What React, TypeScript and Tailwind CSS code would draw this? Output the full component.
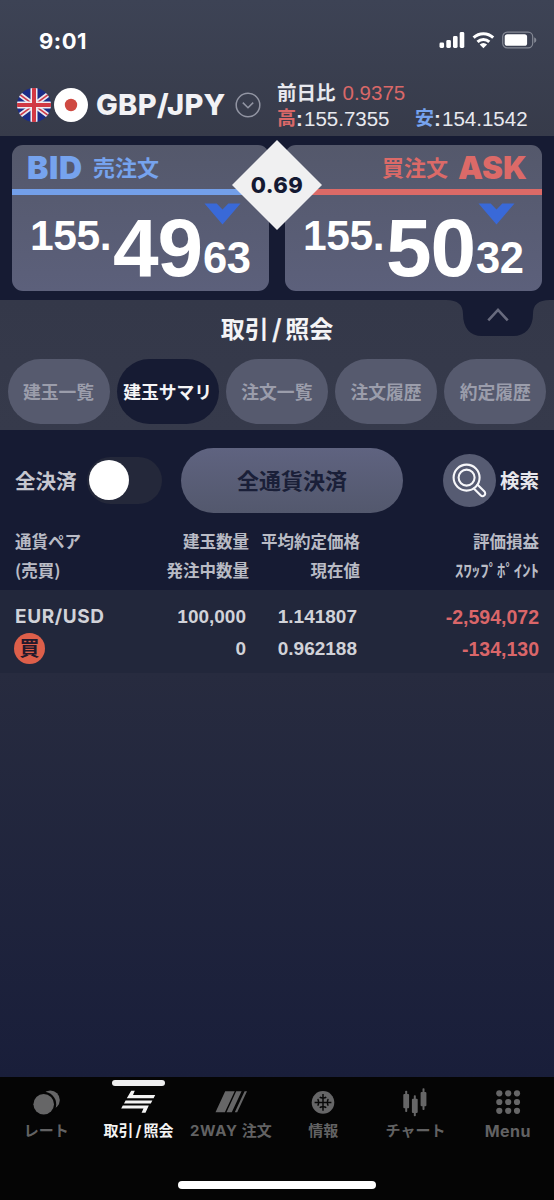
import React from "react";

const JP = "font-['Noto_Sans_CJK_JP',sans-serif]";
const SANS = "font-['Liberation_Sans','Noto_Sans_CJK_JP',sans-serif]";
const UI = "font-['Inter','Noto_Sans_CJK_JP',sans-serif]";

function UkFlag() {
  return (
    <svg className="h-[34px] w-[34px]" viewBox="0 0 34 34">
      <defs>
        <clipPath id="uk"><circle cx="17" cy="17" r="17" /></clipPath>
      </defs>
      <g clipPath="url(#uk)">
        <rect width="34" height="34" fill="#1b2c86" />
        <path d="M-2 3 36 31M36 3-2 31" stroke="#e9e6ee" strokeWidth="5" />
        <path d="M-2 3 36 31M36 3-2 31" stroke="#cf3a48" strokeWidth="1.7" />
        <path d="M17 0v34M0 17h34" stroke="#f0edf2" strokeWidth="7" />
        <path d="M17 0v34M0 17h34" stroke="#d13843" strokeWidth="4" />
      </g>
    </svg>
  );
}

function StatusBar() {
  return (
    <div className="flex h-[80px] items-start justify-between pl-[39px] pr-[16px]">
      <span className={`${UI} mt-[29px] text-[22px] font-bold leading-6 tracking-[0.5px] text-white`}>9:01</span>
      <div className="mt-[31px] flex items-center">
        <svg className="h-[18px] w-[27px]" viewBox="0 0 27 18" fill="#fff">
          <rect x="0.5" y="11.5" width="4.6" height="5.5" rx="1.4" />
          <rect x="7.3" y="9" width="4.6" height="8" rx="1.4" />
          <rect x="14" y="5" width="4.6" height="12" rx="1.4" />
          <rect x="20.7" y="1" width="4.6" height="16" rx="1.4" />
        </svg>
        <svg className="ml-[6px] h-[18px] w-[24px]" viewBox="0 0 24 18" fill="none" stroke="#fff" strokeWidth="3">
          <path d="M1.6 6.7a14.2 14.2 0 0 1 19.6 0" />
          <path d="M5.5 10.8a8.7 8.7 0 0 1 11.8 0" />
          <path d="M11.4 17.2 7.7 13.5a5.3 5.3 0 0 1 7.4 0Z" fill="#fff" stroke="none" />
        </svg>
        <svg className="ml-[6px] h-[18px] w-[36px]" viewBox="0 0 36 18">
          <rect x="0.7" y="1.2" width="30" height="15.6" rx="4.6" fill="none" stroke="#858995" strokeWidth="1.2" />
          <rect x="2.7" y="3.2" width="22.4" height="11.6" rx="2.6" fill="#fff" />
          <path d="M32.2 6.3q2.2.9 2.2 2.8t-2.2 2.8Z" fill="#858995" />
        </svg>
      </div>
    </div>
  );
}

function PairHeader() {
  return (
    <div className="flex h-[56px] items-start pl-[17px]">
      <div className="mt-[8px] flex items-center">
        <UkFlag />
        <svg className="ml-[3px] h-[34px] w-[34px]" viewBox="0 0 34 34">
          <circle cx="17" cy="17" r="17" fill="#fff" />
          <circle cx="17" cy="17" r="6.2" fill="#cf4a42" />
        </svg>
        <span className={`${UI} ml-[8px] w-[130px] whitespace-nowrap text-[29px] font-extrabold leading-[34px] tracking-[0.3px] text-[#f2f2f5]`}>GBP/JPY</span>
        <svg className="ml-[9px] h-[26px] w-[26px]" viewBox="0 0 26 26" fill="none" stroke="#9295a3" strokeWidth="1.5">
          <circle cx="13" cy="13" r="11.8" />
          <path d="m7.8 10.6 5.2 5.2 5.2-5.2" />
        </svg>
      </div>
      <div className={`${SANS} ml-[16px] text-[20.5px] text-[#e8e9ef]`}>
        <div className="flex h-[26px] items-center leading-[26px]">
          <span className="-mt-px text-[19.5px] font-bold">前日比</span>
          <span className="ml-[7px] text-[#d96868]">0.9375</span>
        </div>
        <div className="flex h-[26px] items-center whitespace-nowrap leading-[26px]">
          <span className="-mt-px text-[19px] font-bold text-[#d96868]">高</span>
          <b className="w-[8px]">:</b>
          <span className="w-[111px]">155.7355</span>
          <span className="-mt-px text-[19px] font-bold text-[#76a3ef]">安</span>
          <b className="w-[8px]">:</b>
          <span>154.1542</span>
        </div>
      </div>
    </div>
  );
}

function Price({ big, small }: { big: string; small: string }) {
  return (
    <div className={`${SANS} flex items-start whitespace-nowrap font-bold leading-none text-white`}>
      <span className="mt-[22px] w-[83px] text-[42.5px] tracking-[-0.4px]">155.</span>
      <span className="mt-[14px] w-[90px] text-[82px] tracking-[-1.2px]">{big}</span>
      <span className="mt-[44px] text-[43.5px] tracking-[-0.4px]">{small}</span>
    </div>
  );
}

function Down({ className }: { className: string }) {
  return (
    <svg className={`absolute top-[58px] h-[22px] w-[37px] ${className}`} viewBox="0 0 37 22">
      <path d="M.5.5h12.2l5.8 6 5.8-6h12.2l-18 21Z" fill="#3969d8" />
    </svg>
  );
}

const card = "relative h-[146px] w-[257px] rounded-[11px] bg-linear-to-b from-[#54586b] to-[#5c607b]";

function Rates() {
  return (
    <section className="relative flex h-[164px] justify-between bg-[#161b33] px-[12px] pt-[9px]">
      <div className={card}>
        <div className="flex h-[44px] items-center pl-[15px] text-[#76a3ee]">
          <span className={`${UI} w-[66px] pt-[2px] text-[32px] font-black leading-[44px] tracking-[0.6px]`}>BID</span>
          <span className={`${JP} -mt-[2px] text-[22px] font-bold leading-[44px]`}>売注文</span>
        </div>
        <div className="h-[6px] bg-[#739fe9]" />
        <div className="-mt-0.5 pl-[18px]"><Price big="49" small="63" /></div>
        <Down className="left-[192px]" />
      </div>
      <div className={card}>
        <div className="flex h-[44px] items-center justify-end pr-[15px] text-[#dc6a68]">
          <span className={`${JP} -mt-[2px] text-[22px] font-bold leading-[44px]`}>買注文</span>
          <span className={`${UI} ml-[10px] pt-[2px] text-[31.5px] font-black leading-[44px]`}>ASK</span>
        </div>
        <div className="h-[6px] bg-[#dc6a67]" />
        <div className="-mt-0.5 pl-[18px]"><Price big="50" small="32" /></div>
        <Down className="left-[193px]" />
      </div>
      <div className="absolute left-[232px] top-[4px] flex h-[90px] w-[90px] items-center justify-center bg-[#f0f0f1] [clip-path:polygon(50%_0,100%_50%,50%_100%,0_50%)]">
        <span className={`${UI} text-[22px] font-extrabold leading-6 tracking-[0.5px] text-[#141932]`}>0.69</span>
      </div>
    </section>
  );
}

const tabs = ["建玉一覧", "建玉サマリ", "注文一覧", "注文履歴", "約定履歴"];

function TabsPanel() {
  return (
    <section className="relative h-[130px] bg-linear-to-b from-[#343849] to-[#363a4b]">
      <svg className="absolute left-[446px] top-0 h-[36px] w-[104px]" viewBox="0 0 104 36">
        <path d="M0 0C12 0 17 5 17 14C17 28 24 36 36 36H67C79 36 87 28 87 14C87 5 92 0 104 0Z" fill="#161b33" />
        <path d="m42.3 20.3 9.7-10.5 9.7 10.5" fill="none" stroke="#686b7e" strokeWidth="2.6" />
      </svg>
      <h1 className={`${JP} flex h-[59px] items-center justify-center pb-[3px] text-[24px] font-bold leading-[56px] text-[#f4f4f6]`}>
        取引<span className="mx-[3.5px] [-webkit-text-stroke:0.5px_#f4f4f6]">/</span>照会
      </h1>
      <div className="flex gap-[7.2px] pl-[7.5px]">
        {tabs.map((t, i) => (
          <button key={t} className={`${JP} flex h-[65px] w-[102px] shrink-0 items-center justify-center whitespace-nowrap rounded-full pb-px text-[17.8px] font-bold ${i === 1 ? "bg-[#161b33] text-[#f5f5f7]" : "bg-[#565a6e] text-[#9b9dab]"}`}>{t}</button>
        ))}
      </div>
    </section>
  );
}

function Controls() {
  return (
    <div className="flex h-[101px] items-center pl-[15px]">
      <span className={`${JP} w-[72px] pb-px text-[20.5px] font-bold text-[#c6c7cf]`}>全決済</span>
      <div className="-mt-px flex h-[47px] w-[75px] items-center rounded-full bg-[#24283a] pl-[2px]">
        <div className="h-[40px] w-[40px] rounded-full bg-white" />
      </div>
      <button className={`${JP} ml-[19px] h-[65px] w-[222px] rounded-full bg-linear-to-b from-[#5f6380] to-[#53586d] pb-[3px] text-[22px] font-bold text-[#1a1f38]`}>全通貨決済</button>
      <svg className="ml-[40px] h-[53px] w-[53px]" viewBox="0 0 53 53" fill="none">
        <circle cx="26.5" cy="26.5" r="26.5" fill="#565b72" />
        <g stroke="#f7f7fa" strokeWidth="2.1">
          <circle cx="23.6" cy="23.6" r="13" />
          <circle cx="23.6" cy="23.6" r="8" />
          <path d="m30.8 34.5 6.8 6.8a2.6 2.6 0 0 0 3.8-3.8l-6.8-6.8" strokeLinecap="round" />
        </g>
      </svg>
      <span className={`${JP} ml-[4px] pb-[2px] text-[19.5px] font-bold text-[#e7e7ec]`}>検索</span>
    </div>
  );
}

const cols = "grid grid-cols-[105px_129px_111px_179px] px-[15px]";

function Positions() {
  return (
    <>
      <div className={`${cols} ${JP} h-[59px] content-start auto-rows-[30px] whitespace-nowrap bg-[#161b33] text-[16.5px] font-bold leading-[30px] text-[#b9bbc5]`}>
        <span className="-mt-[5px]">通貨ペア</span>
        <span className="-mt-[5px] text-right">建玉数量</span>
        <span className="-mt-[5px] text-right">平均約定価格</span>
        <span className="-mt-[5px] text-right">評価損益</span>
        <span className="-mt-[6px]">(売買)</span>
        <span className="-mt-[6px] text-right">発注中数量</span>
        <span className="-mt-[6px] text-right">現在値</span>
        <span className="-mt-[6px] text-right text-[16.8px]">ｽﾜｯﾌﾟﾎﾟｲﾝﾄ</span>
      </div>
      <div className={`${cols} ${SANS} h-[83px] auto-rows-[32px] whitespace-nowrap bg-[#22273b] pt-[11px] text-[19px] font-bold leading-[32px] text-[#d1d2d8]`}>
        <span className={`${UI} text-[19px] tracking-[0.6px]`}>EUR/USD</span>
        <span className="pr-[3px] text-right">100,000</span>
        <span className="pr-[3px] text-right">1.141807</span>
        <span className="text-right text-[19.5px] text-[#da6669]">-2,594,072</span>
        <span className={`${JP} -ml-px flex h-[31px] w-[31px] items-center justify-center rounded-full bg-[#dd5f4a] pb-[2px] text-[20px] leading-[28px] text-[#22192c]`}>買</span>
        <span className="pr-[3px] text-right">0</span>
        <span className="pr-[3px] text-right">0.962188</span>
        <span className="text-right text-[19.5px] text-[#da6669]">-134,130</span>
      </div>
    </>
  );
}

const icons = [
  <svg key="r" viewBox="0 0 40 32" className="h-8 w-10">
    <circle cx="24.3" cy="14" r="9.5" />
    <circle cx="17.7" cy="18.3" r="12.5" fill="#050505" />
    <circle cx="17.7" cy="18.3" r="10.3" />
  </svg>,
  <svg key="t" viewBox="0 0 40 32" className="h-8 w-10">
    <path d="M13.2 4.7h3.6l-1.8 4.4h22.2l-1.6 3.1H8.8ZM7.6 14.4h26.8l-1.6 3H6ZM4.8 19.5h26L27.5 26.7h-3.9l1.9-4.2H3.2Z" />
  </svg>,
  <svg key="w" viewBox="0 0 40 32" className="h-8 w-10">
    <path d="M14.2 5.3h9.5L13.9 26.2H4.5ZM25.2 5.3h5.4l-9.8 20.9h-5.3ZM33.6 5.3h2.4l-9.8 20.9h-2.4Z" />
  </svg>,
  <svg key="i" viewBox="0 0 40 32" className="h-8 w-10">
    <circle cx="20" cy="16.4" r="11.3" />
    <g stroke="#080808" strokeWidth="1.5" fill="none">
      <path d="M20 8v16.8M11.6 16.4h16.8" />
      <path d="M16.8 11q.8 1 3.2 1 2.4 0 3.2-1M16.8 21.8q.8-1 3.2-1 2.4 0 3.2 1M14.6 13.2q1 .8 1 3.2 0 2.4-1 3.2M25.4 13.2q-1 .8-1 3.2 0 2.4 1 3.2" />
    </g>
  </svg>,
  <svg key="c" viewBox="0 0 40 32" className="h-8 w-10">
    <rect x="8.3" y="8" width="5.8" height="14.3" rx="1" /><rect x="10.2" y="4.8" width="2" height="21.2" rx="0.8" />
    <rect x="16.9" y="12.7" width="5.8" height="14.2" rx="1" /><rect x="18.8" y="9.3" width="2" height="20.9" rx="0.8" />
    <rect x="25.6" y="6" width="5.8" height="14.2" rx="1" /><rect x="27.5" y="2.3" width="2" height="21.8" rx="0.8" />
  </svg>,
  <svg key="m" viewBox="0 0 40 32" className="h-8 w-10">
    {[7.3, 16, 24.8].map((y) => [11.3, 20.2, 29].map((x) => <circle key={`${x}-${y}`} cx={x} cy={y} r="3.1" />))}
  </svg>,
];

const labels: React.ReactNode[] = ["レート", <>取引<span className="mx-[2px]">/</span>照会</>, <><span className="tracking-[0.7px]">2WAY</span><span className="ml-[4px]">注文</span></>, "情報", "チャート", <span className="text-[16px] tracking-[0.5px]">Menu</span>];

function Nav() {
  return (
    <nav className="h-[123px] bg-[#050505] pt-[3px]">
      <div className="grid grid-cols-6">
        {icons.map((icon, i) => (
          <div key={i} className={`flex flex-col items-center ${i === 1 ? "fill-[#f3f3f3] text-[#f3f3f3]" : "fill-[#666667] text-[#626263]"}`}>
            <div className={`h-[6px] w-[53px] rounded-full ${i === 1 ? "bg-[#eeeeef]" : "bg-transparent"}`} />
            {icon}
            <span className={`${UI} mt-[1px] whitespace-nowrap text-[15px] font-bold leading-[24px]`}>{labels[i]}</span>
          </div>
        ))}
      </div>
      <div className="mx-auto mt-[37px] h-[8px] w-[198px] rounded-full bg-white" />
    </nav>
  );
}

export default function App() {
  return (
    <main className="flex h-[1200px] w-[554px] flex-col overflow-hidden bg-[#161b33]">
      <header className="h-[136px] shrink-0 bg-linear-to-b from-[#3d4355] to-[#373b4a]">
        <StatusBar />
        <PairHeader />
      </header>
      <Rates />
      <TabsPanel />
      <Controls />
      <Positions />
      <div className="flex-1 bg-linear-to-b from-[#272b3f] to-[#191e3a]" />
      <Nav />
    </main>
  );
}
